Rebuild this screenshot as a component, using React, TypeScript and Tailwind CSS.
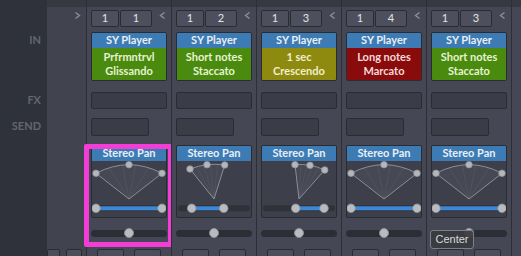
import React from 'react';

type Pt = [number, number];

type Strip = {
  a: string;
  b: string;
  line1: string;
  line2: string;
  color: string;
  text: string;
  dots: [Pt, Pt, Pt];
  width: [number, number];
};

const WIDE: { dots: [Pt, Pt, Pt]; width: [number, number] } = {
  dots: [[4, 12.3], [37, 3.7], [70, 12.3]],
  width: [4, 70],
};

const strips: Strip[] = [
  { a: '1', b: '1', line1: 'Prfrmntrvl', line2: 'Glissando', color: 'bg-[#4a8a0e]', text: 'text-[#e6f3d2]', ...WIDE },
  {
    a: '1', b: '2', line1: 'Short notes', line2: 'Staccato', color: 'bg-[#4a8a0e]', text: 'text-[#e6f3d2]',
    dots: [[13, 8], [30, 3.7], [47.7, 4]],
    width: [14.7, 46.7],
  },
  {
    a: '1', b: '3', line1: '1 sec', line2: 'Crescendo', color: 'bg-[#8e8a10]', text: 'text-[#f1efc8]',
    dots: [[33, 3.7], [48, 4.3], [62.7, 9]],
    width: [33.7, 62],
  },
  { a: '1', b: '4', line1: 'Long notes', line2: 'Marcato', color: 'bg-[#8a0b0c]', text: 'text-[#f5d9d9]', ...WIDE },
  { a: '1', b: '3', line1: 'Short notes', line2: 'Staccato', color: 'bg-[#4a8a0e]', text: 'text-[#e6f3d2]', ...WIDE },
];

const APEX: Pt = [37, 38];

function Chevron({ dir }: { dir: 'left' | 'right' }) {
  return (
    <svg width="7" height="7" viewBox="0 0 7 7" className="shrink-0">
      <polyline
        points={dir === 'left' ? '5.5,0.5 1.5,3.5 5.5,6.5' : '1.5,0.5 5.5,3.5 1.5,6.5'}
        fill="none"
        stroke="#8e919b"
        strokeWidth="1.3"
      />
    </svg>
  );
}

function PanDisplay({ dots, width }: { dots: [Pt, Pt, Pt]; width: [number, number] }) {
  const [p1, p2, p3] = dots;
  // control point so the curve passes through the middle dot
  const c: Pt = [2 * p2[0] - (p1[0] + p3[0]) / 2, 2 * p2[1] - (p1[1] + p3[1]) / 2];
  const curve = `M ${p1[0]} ${p1[1]} Q ${c[0]} ${c[1]} ${p3[0]} ${p3[1]}`;
  const rays = [0.2, 0.4, 0.6, 0.8].map((t) => {
    const x = (1 - t) * (1 - t) * p1[0] + 2 * (1 - t) * t * c[0] + t * t * p3[0];
    const y = (1 - t) * (1 - t) * p1[1] + 2 * (1 - t) * t * c[1] + t * t * p3[1];
    return [x, y];
  });

  return (
    <svg width="74" height="56" viewBox="0 0 74 56" className="block">
      <path d={`M ${APEX[0]} ${APEX[1]} L ${p1[0]} ${p1[1]} Q ${c[0]} ${c[1]} ${p3[0]} ${p3[1]} Z`} fill="#ffffff" fillOpacity="0.05" />
      {rays.map(([x, y], i) => (
        <line key={i} x1={APEX[0]} y1={APEX[1]} x2={x} y2={y} stroke="#ffffff" strokeOpacity="0.05" strokeWidth="1" />
      ))}
      <path d={curve} fill="none" stroke="#8b8e96" strokeWidth="1" />
      <line x1={APEX[0]} y1={APEX[1]} x2={p1[0]} y2={p1[1]} stroke="#8b8e96" strokeWidth="1" />
      <line x1={APEX[0]} y1={APEX[1]} x2={p3[0]} y2={p3[1]} stroke="#8b8e96" strokeWidth="1" />
      {dots.map(([x, y], i) => (
        <circle key={i} cx={x} cy={y} r="3.3" fill="#b4b6ba" stroke="#8d9095" strokeWidth="0.8" />
      ))}

      {/* width bar */}
      <rect x="1" y="44.3" width="72" height="6" rx="3" fill="#30323a" />
      <rect x={width[0]} y="45.3" width={width[1] - width[0]} height="4" fill="#3c87d6" />
      <circle cx={width[0]} cy="47.3" r="4.3" fill="#b9bbbf" stroke="#8d9095" strokeWidth="0.8" />
      <circle cx={width[1]} cy="47.3" r="4.3" fill="#b9bbbf" stroke="#8d9095" strokeWidth="0.8" />
    </svg>
  );
}

function BottomButtons() {
  return (
    <div className="mt-[12px] flex gap-[10px] pl-[10px]">
      <div className="h-[20px] w-[27px] rounded-[2px] border border-[#2a2c33] bg-[#4c4f5b] pt-[4px] text-center text-[11px] font-bold leading-[12px] text-[#d6d8de]">
        M
      </div>
      <div className="h-[20px] w-[27px] rounded-[2px] border border-[#2a2c33] bg-[#4c4f5b] pt-[4px] text-center text-[11px] font-bold leading-[12px] text-[#d6d8de]">
        S
      </div>
    </div>
  );
}

function ChannelStrip({ strip, highlight, tooltip }: { strip: Strip; highlight?: boolean; tooltip?: boolean }) {
  return (
    <div className="relative flex w-[85px] shrink-0 flex-col border-l border-[#2d2f37] bg-[#454854] *:shrink-0">
      <div className="h-[7px] bg-[#363942]" />

      <div className="mt-[3px] flex h-[17px] items-center pl-[4px]">
        <div className="flex h-[17px] w-[28px] items-center justify-center rounded-[2px] border border-[#2a2c33] bg-[#4d505c] text-[11px] text-[#e4e5ea]">
          {strip.a}
        </div>
        <div className="ml-[1px] flex h-[17px] w-[32px] items-center justify-center rounded-[2px] border border-[#2a2c33] bg-[#4d505c] text-[11px] text-[#e4e5ea]">
          {strip.b}
        </div>
        <div className="ml-[7px] -mt-[6px]">
          <Chevron dir="left" />
        </div>
      </div>

      {/* instrument module */}
      <div className="ml-[4px] mt-[5px] w-[76px] overflow-hidden rounded-[2px] border border-[#2a2c33]">
        <div className="flex h-[15px] items-center justify-center bg-[#3d7bb4] text-[11px] font-bold text-[#e8eff6]">
          SY Player
        </div>
        <div className={`flex h-[32px] flex-col items-center justify-center text-[11px] font-bold leading-[14px] ${strip.color} ${strip.text}`}>
          <span>{strip.line1}</span>
          <span>{strip.line2}</span>
        </div>
      </div>

      {/* FX */}
      <div className="ml-[4px] mt-[11px] h-[17px] w-[76px] rounded-[2px] border border-[#2a2c32] bg-[#3a3d47]" />
      {/* SEND */}
      <div className="ml-[4px] mt-[9px] h-[18px] w-[58px] rounded-[2px] border border-[#2a2c32] bg-[#3a3d47]" />

      {/* stereo pan */}
      <div className="ml-[4px] mt-[9px] w-[76px] overflow-hidden rounded-[2px] border border-[#2a2c33] bg-[#3d404a]">
        <div className="flex h-[15px] items-center justify-center bg-[#3d7bb4] text-[11px] font-bold text-[#e8eff6]">
          Stereo Pan
        </div>
        <PanDisplay dots={strip.dots} width={strip.width} />
      </div>

      {/* pan slider */}
      <div className="relative ml-[4px] mt-[12px] h-[7px] w-[76px] rounded-full bg-[#2c2e36]">
        <div className="absolute left-[33px] top-[-2px] h-[10px] w-[10px] rounded-full border border-[#8d9095] bg-[#b9bbbf]" />
      </div>

      <BottomButtons />

      {highlight && (
        <div className="pointer-events-none absolute left-[-3px] top-[144px] h-[103px] w-[89px] rounded-[2px] border-[5px] border-[#f23ed6]" />
      )}

      {tooltip && (
        <div className="absolute left-[3px] top-[230px] flex h-[19px] w-[44px] items-center justify-center rounded-[3px] border border-[#7d7f85] bg-[#3a3c41]/95 font-['Liberation_Sans',sans-serif] text-[11px] text-[#d9d9db]">
          Center
        </div>
      )}
    </div>
  );
}

export default function App() {
  return (
    <div className="flex h-[256px] w-[521px] overflow-hidden bg-[#454854] font-['Lato',sans-serif]">
      {/* row labels */}
      <div className="flex w-[47px] shrink-0 flex-col items-end bg-[#2f323a] pr-[6px] text-[11px] font-bold leading-[14px] text-[#626672]">
        <span className="mt-[33px]">IN</span>
        <span className="mt-[46px]">FX</span>
        <span className="mt-[12px]">SEND</span>
      </div>

      {/* master column */}
      <div className="flex w-[39px] shrink-0 flex-col bg-[#41444e] *:shrink-0">
        <div className="h-[7px] bg-[#363942]" />
        <div className="mt-[5px] flex justify-end pr-[5px]">
          <Chevron dir="right" />
        </div>
        <div className="mt-[230px] flex gap-[6px]">
          <div className="h-[20px] w-[13px] rounded-[2px] border border-[#2a2c33] bg-[#4c4f5b]" />
          <div className="h-[20px] w-[16px] rounded-[2px] border border-[#2a2c33] bg-[#4c4f5b]" />
        </div>
      </div>

      {strips.map((s, i) => (
        <ChannelStrip key={i} strip={s} highlight={i === 0} tooltip={i === 4} />
      ))}

      <div className="flex flex-1 flex-col border-l border-[#2d2f37] bg-[#454854]">
        <div className="h-[7px] bg-[#363942]" />
      </div>
    </div>
  );
}
